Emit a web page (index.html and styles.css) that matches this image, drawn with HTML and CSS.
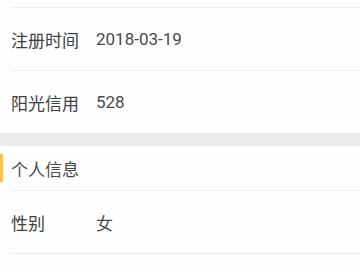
FILE: index.html
```html
<!DOCTYPE html>
<html lang="zh-CN">
<head>
  <meta charset="UTF-8" />
  <meta name="viewport" content="width=device-width, initial-scale=1.0"/>
  <title>个人资料</title>
  <link rel="stylesheet" href="styles.css">
</head>
<body>

  <div class="card">
    <div class="row cut"></div>
    <div class="row">
      <span class="label">注册时间</span>
      <span class="value">2018-03-19</span>
    </div>
    <div class="row">
      <span class="label">阳光信用</span>
      <span class="value">528</span>
    </div>
  </div>

  <div class="card">
    <div class="section-title">
      <span class="mark"></span>
      <span>个人信息</span>
    </div>
    <div class="row">
      <span class="label">性别</span>
      <span class="value">女</span>
    </div>
    <div class="row last"></div>
  </div>

</body>
</html>
```

FILE: styles.css
```css
:root {
  --bg-color: #ebebeb;
  --card-color: #fefefe;
  --line-color: #eeeeee;
  --text-color: #404040;
  --value-color: #4a4a4a;
  --accent: #f8c746;
}

body {
  margin: 0;
  font-family: Roboto, "Noto Sans CJK SC", sans-serif;
  background-color: var(--bg-color);
  color: var(--text-color);
}

.card {
  background-color: var(--card-color);
}

.card + .card {
  margin-top: 13px;
}

.row {
  display: flex;
  align-items: center;
  height: 62px;
  margin-left: 11px;
  border-top: 1px solid var(--line-color);
  font-size: 17px;
}

/* bottom of the row scrolled off above */
.row.cut {
  height: 7px;
  border-top: none;
}

/* top of the next row, cut by the frame */
.row.last {
  height: 16px;
}

.label {
  width: 85px;
  flex-shrink: 0;
}

.value {
  color: var(--value-color);
}

.section-title {
  display: flex;
  align-items: center;
  height: 44px;
  font-size: 17px;
  color: #4a4a4a;
}

.section-title .mark {
  width: 3px;
  height: 28px;
  margin-right: 8px;
  background-color: var(--accent);
}
```
